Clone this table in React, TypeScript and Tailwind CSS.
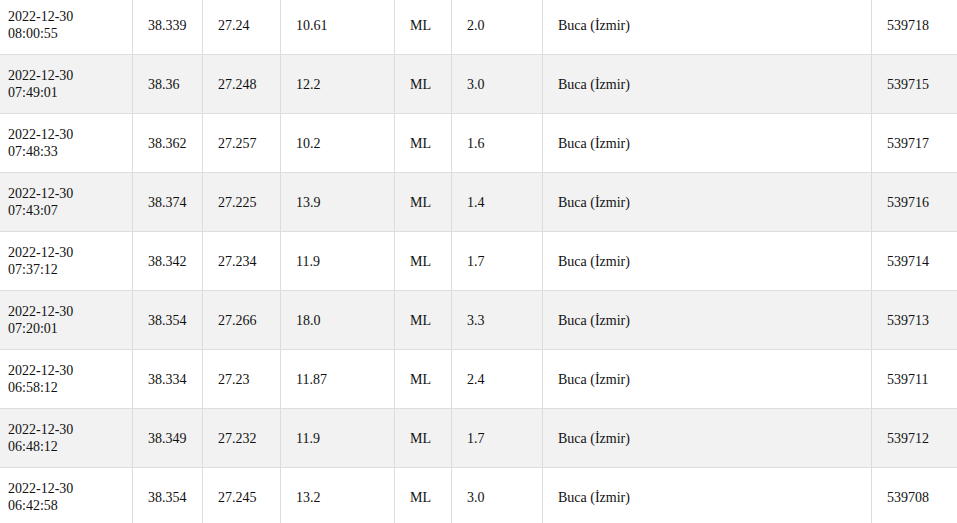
type Quake = {
  date: string;
  time: string;
  lat: string;
  lng: string;
  depth: string;
  type: string;
  mag: string;
  place: string;
  id: string;
};

const quakes: Quake[] = [
  { date: "2022-12-30", time: "08:00:55", lat: "38.339", lng: "27.24", depth: "10.61", type: "ML", mag: "2.0", place: "Buca (İzmir)", id: "539718" },
  { date: "2022-12-30", time: "07:49:01", lat: "38.36", lng: "27.248", depth: "12.2", type: "ML", mag: "3.0", place: "Buca (İzmir)", id: "539715" },
  { date: "2022-12-30", time: "07:48:33", lat: "38.362", lng: "27.257", depth: "10.2", type: "ML", mag: "1.6", place: "Buca (İzmir)", id: "539717" },
  { date: "2022-12-30", time: "07:43:07", lat: "38.374", lng: "27.225", depth: "13.9", type: "ML", mag: "1.4", place: "Buca (İzmir)", id: "539716" },
  { date: "2022-12-30", time: "07:37:12", lat: "38.342", lng: "27.234", depth: "11.9", type: "ML", mag: "1.7", place: "Buca (İzmir)", id: "539714" },
  { date: "2022-12-30", time: "07:20:01", lat: "38.354", lng: "27.266", depth: "18.0", type: "ML", mag: "3.3", place: "Buca (İzmir)", id: "539713" },
  { date: "2022-12-30", time: "06:58:12", lat: "38.334", lng: "27.23", depth: "11.87", type: "ML", mag: "2.4", place: "Buca (İzmir)", id: "539711" },
  { date: "2022-12-30", time: "06:48:12", lat: "38.349", lng: "27.232", depth: "11.9", type: "ML", mag: "1.7", place: "Buca (İzmir)", id: "539712" },
  { date: "2022-12-30", time: "06:42:58", lat: "38.354", lng: "27.245", depth: "13.2", type: "ML", mag: "3.0", place: "Buca (İzmir)", id: "539708" },
];

const cell = "border-r border-b border-[#dddddd] py-3 pl-[15px] pr-2 align-middle text-left";

export default function App() {
  return (
    <div className="w-[957px] h-[523px] overflow-hidden bg-white text-[#111] text-[14px] leading-[17px] font-['Liberation_Serif','Times_New_Roman',serif]">
      <table className="-mt-[4px] w-[1010px] table-fixed border-separate border-spacing-0">
        <colgroup>
          <col className="w-[133px]" />
          <col className="w-[70px]" />
          <col className="w-[78px]" />
          <col className="w-[114px]" />
          <col className="w-[57px]" />
          <col className="w-[91px]" />
          <col className="w-[329px]" />
          <col className="w-[138px]" />
        </colgroup>
        <tbody>
          {quakes.map((q, i) => (
            <tr key={q.id} className={i % 2 === 1 ? "bg-[#f2f2f2]" : "bg-white"}>
              <td className="border-r border-b border-[#dddddd] py-3 pl-2 pr-2 align-middle text-left">
                {q.date}
                <br />
                {q.time}
              </td>
              <td className={cell}>{q.lat}</td>
              <td className={cell}>{q.lng}</td>
              <td className={cell}>{q.depth}</td>
              <td className={cell}>{q.type}</td>
              <td className={cell}>{q.mag}</td>
              <td className={cell}>{q.place}</td>
              <td className={cell}>{q.id}</td>
            </tr>
          ))}
        </tbody>
      </table>
    </div>
  );
}
